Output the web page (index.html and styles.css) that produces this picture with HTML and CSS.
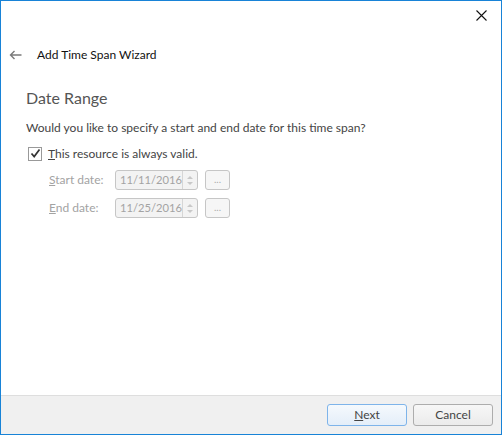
FILE: index.html
```html
<!DOCTYPE html>
<html lang="en">
<head>
    <meta charset="UTF-8">
    <meta name="viewport" content="width=device-width, initial-scale=1.0">
    <title>Add Time Span Wizard</title>
    <link rel="stylesheet" href="styles.css">
</head>
<body>
    <div class="window">
        <div class="titlebar">
            <button class="close" title="Close">
                <svg width="11" height="11" viewBox="0 0 11 11"><path d="M0.5 0.5 L10.5 10.5 M10.5 0.5 L0.5 10.5" stroke="#111" stroke-width="1.1" fill="none"/></svg>
            </button>
        </div>

        <div class="wizard-header">
            <svg class="back" width="13" height="10" viewBox="0 0 13 10"><path d="M12.5 5 H1.5 M5.5 1 L1.5 5 L5.5 9" stroke="#7a7a7a" stroke-width="1.4" fill="none"/></svg>
            <span class="wizard-title">Add Time Span Wizard</span>
        </div>

        <div class="content">
            <h2>Date Range</h2>
            <p class="question">Would you like to specify a start and end date for this time span?</p>

            <label class="check">
                <span class="box">
                    <svg width="11" height="11" viewBox="0 0 11 11"><path d="M1.5 5.5 L4.2 8.6 L9.5 1.5" stroke="#333" stroke-width="1.7" fill="none"/></svg>
                </span>
                <span><u>T</u>his resource is always valid.</span>
            </label>

            <div class="date-rows">
                <span class="field-label"><u>S</u>tart date:</span>
                <div class="picker">
                    <div class="date-input">
                        <span class="value">11/11/2016</span>
                        <span class="spin"><i class="up"></i><i class="down"></i></span>
                    </div>
                    <button class="more" disabled>...</button>
                </div>

                <span class="field-label"><u>E</u>nd date:</span>
                <div class="picker">
                    <div class="date-input">
                        <span class="value">11/25/2016</span>
                        <span class="spin"><i class="up"></i><i class="down"></i></span>
                    </div>
                    <button class="more" disabled>...</button>
                </div>
            </div>
        </div>

        <div class="footer">
            <button class="btn default"><u>N</u>ext</button>
            <button class="btn">Cancel</button>
        </div>
    </div>
</body>
</html>
```

FILE: styles.css
```css
* {
    box-sizing: border-box;
}

body {
    margin: 0;
    font-family: Lato, "Noto Sans", sans-serif;
    font-size: 12px;
    line-height: 16px;
    color: #444;
    background: #fff;
}

.window {
    width: 502px;
    height: 435px;
    border: 1px solid #1883d7;
    display: flex;
    flex-direction: column;
    background: #fff;
}

.titlebar {
    height: 30px;
    display: flex;
    justify-content: flex-end;
}

.close {
    width: 30px;
    height: 29px;
    border: none;
    background: none;
    padding: 0;
    margin-right: 5px;
    display: flex;
    align-items: center;
    justify-content: center;
}

.wizard-header {
    height: 48px;
    display: flex;
    align-items: center;
    padding-left: 8px;
    padding-bottom: 1px;
}

.back {
    margin-right: 15px;
}

.wizard-title {
    color: #111;
}

.content {
    flex: 1;
    padding: 9px 25px 0;
}

h2 {
    margin: 0 0 12px;
    font-size: 16px;
    line-height: 20px;
    font-weight: normal;
    color: #555;
}

.question {
    margin: 0 0 8px;
}

.check {
    display: flex;
    align-items: center;
    gap: 6px;
    padding-left: 2px;
    height: 19px;
}

.check .box {
    width: 14px;
    height: 14px;
    border: 1px solid #999;
    background: #fff;
    display: flex;
    align-items: center;
    justify-content: center;
}

.date-rows {
    display: grid;
    grid-template-columns: 66px auto;
    row-gap: 8px;
    align-items: center;
    padding-left: 23px;
    margin-top: 7px;
}

.field-label {
    color: #a3a3a3;
}

.picker {
    display: flex;
    gap: 7px;
}

.date-input {
    width: 83px;
    height: 20px;
    border: 1px solid #c6c6c6;
    border-radius: 3px;
    background: #f3f3f3;
    display: flex;
    color: #a3a3a3;
}

.date-input .value {
    flex: 1;
    padding-left: 4px;
    font-size: 11.2px;
    line-height: 18px;
}

.spin {
    width: 15px;
    border-left: 1px solid #d6d6d6;
    display: flex;
    flex-direction: column;
    align-items: center;
    justify-content: center;
    gap: 3px;
}

.spin i {
    width: 0;
    height: 0;
    border-left: 3px solid transparent;
    border-right: 3px solid transparent;
}

.spin .up {
    border-bottom: 3px solid #c8c8c8;
}

.spin .down {
    border-top: 3px solid #c8c8c8;
}

.more {
    width: 25px;
    height: 20px;
    border: 1px solid #c6c6c6;
    border-radius: 3px;
    background: #f6f6f6;
    color: #aaa;
    font-family: inherit;
    font-size: 10px;
    padding: 0 0 3px;
}

.footer {
    height: 39px;
    border-top: 1px solid #dedede;
    background: #f0f0f0;
    display: flex;
    justify-content: flex-end;
    align-items: center;
    gap: 6px;
    padding: 0 8px 1px 0;
}

.btn {
    width: 80px;
    height: 22px;
    border: 1px solid #adadad;
    border-radius: 3px;
    background: linear-gradient(#f7f7f7, #ebebeb);
    font-family: inherit;
    font-size: 12px;
    color: #444;
    padding: 0;
}

.btn.default {
    border-color: #7eb4ea;
    background: linear-gradient(#f5f9fd, #e4eef9);
}
```
